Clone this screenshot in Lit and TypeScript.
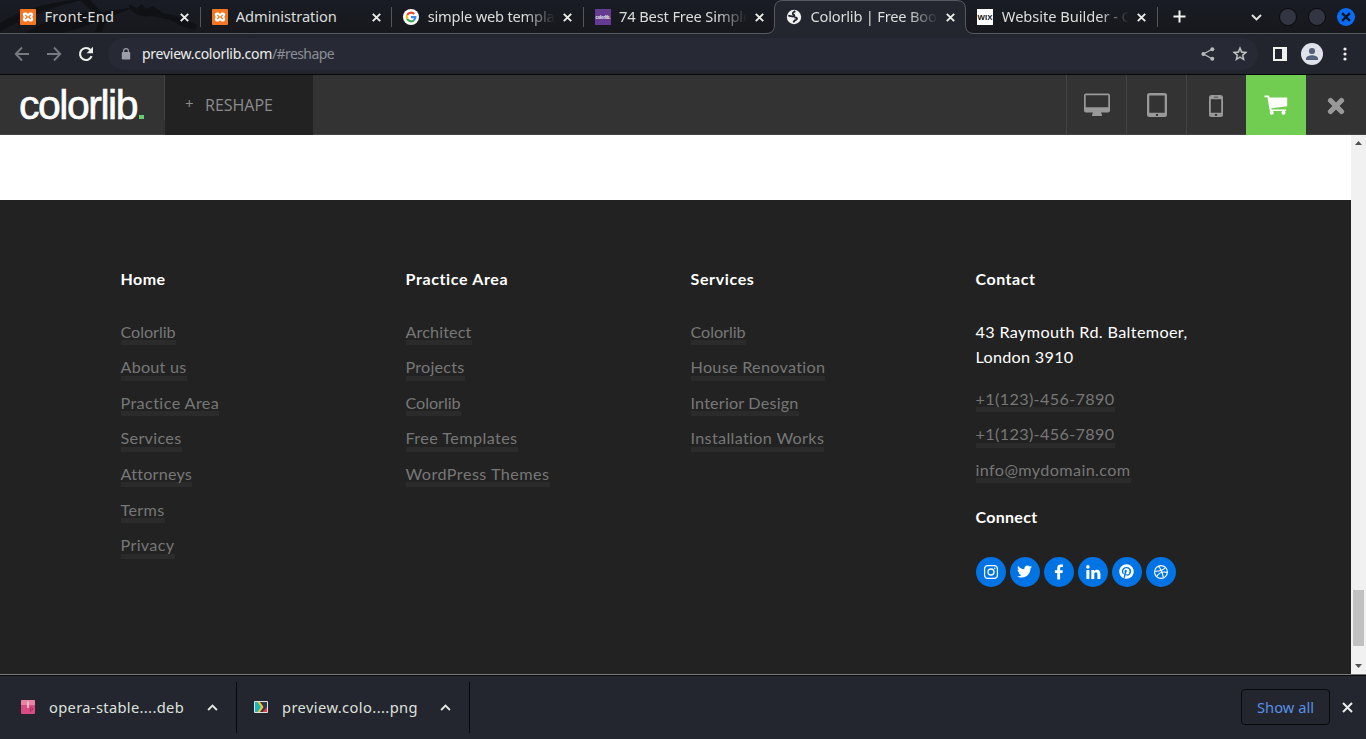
import { LitElement, html, css } from "lit";
import { customElement, property } from "lit/decorators.js";

/* Text whose tracking is derived from the width it has to fill. */
@customElement("fit-text")
class FitText extends LitElement {
  @property({ type: Number }) w = 0;
  @property() text = "";
  static styles = css`
    :host { display: inline-block; white-space: pre; }
    .t { display: inline-block; white-space: pre; }
  `;
  render() { return html`<span class="t">${this.text}</span>`; }
  firstUpdated() {
    const el = this.renderRoot.querySelector(".t") as HTMLElement;
    const natural = el.getBoundingClientRect().width;
    el.style.letterSpacing = (this.w - natural) / this.text.length + "px";
  }
}

const fit = (text: string, w: number) => html`<fit-text .text=${text} .w=${w}></fit-text>`;

const xampp = html`<svg width="16" height="16" viewBox="0 0 16 16"><rect width="16" height="16" rx="1" fill="#f37623"/><path d="M5 3.400h1.600L8 4.900l1.400-1.500H11c1.400 0 2.200.9 2.200 2.200 0 1-.4 1.700-1 2.300.6.6 1 1.400 1 2.300 0 1.400-.9 2.300-2.200 2.300H9.400L8 11.200l-1.400 1.300H5c-1.400 0-2.200-.9-2.200-2.200 0-1 .4-1.800 1-2.400-.6-.6-1-1.300-1-2.300 0-1.300.8-2.200 2.200-2.200z" fill="#fff"/><path d="M5.300 5.800l1.800 2.100-1.800 2.200M10.700 5.800l-1.800 2.100 1.800 2.200M7 8h2" stroke="#f37623" stroke-width="1.200" fill="none"/></svg>`;
const google = html`<svg width="16" height="16" viewBox="0 0 16 16"><circle cx="8" cy="8" r="8" fill="#fff"/><g fill="none" stroke-width="2.100"><path d="M4.200 5.900A4.400 4.400 0 0 1 11.200 5" stroke="#ea4335"/><path d="M4.200 10.100a4.400 4.400 0 0 1 0-4.200" stroke="#fbbc05"/><path d="M11 11.200a4.400 4.400 0 0 1-6.800-1.100" stroke="#34a853"/><path d="M8 8.100h4.400a4.300 4.300 0 0 1-1.500 3.200" stroke="#4285f4"/></g></svg>`;
const clib = html`<svg width="16" height="16" viewBox="0 0 16 16"><rect width="16" height="16" fill="#653b91"/><text x=".5" y="9.800" font-family="Liberation Sans" font-weight="bold" font-size="5" textLength="15" lengthAdjust="spacingAndGlyphs" fill="#fff">colorlib.</text></svg>`;
const globe = html`<svg width="16" height="16" viewBox="0 0 16 16"><circle cx="8" cy="8" r="7.200" fill="#f1f3f0"/><path d="M9.300 2.200C7.800 3 6.600 3.500 6.800 4.700c.2 1 1.600.8 1.500 1.900-.1.900-1.200 1-2.200.8L2.200 6.600M8.300 8.600c1.500-.3 2.500.1 2.700.9.200.9-.8 1.300-1.600 1.700-.8.400-1.200 1.200-2.200 2" fill="none" stroke="#23262f" stroke-width="1.900"/></svg>`;
const wix = html`<svg width="16" height="16" viewBox="0 0 16 16"><rect width="16" height="16" fill="#fff"/><text x=".6" y="10.700" font-family="Liberation Sans" font-weight="bold" font-size="7.500" textLength="14.800" lengthAdjust="spacingAndGlyphs" fill="#111">WIX</text></svg>`;

const tabs = [
  { icon: xampp, text: "Front-End", w: 70 },
  { icon: xampp, text: "Administration", w: 101 },
  { icon: google, text: "simple web template", w: 140, cut: true },
  { icon: clib, text: "74 Best Free Simple", w: 132, cut: true },
  { icon: globe, text: "Colorlib | Free Boots", w: 138, cut: true, active: true },
  { icon: wix, text: "Website Builder - Cr", w: 135, cut: true },
];

const columns = [
  { title: "Home", w: 45, links: [["Colorlib", 55], ["About us", 66], ["Practice Area", 99], ["Services", 61], ["Attorneys", 71], ["Terms", 44], ["Privacy", 54]] },
  { title: "Practice Area", w: 103, links: [["Architect", 66], ["Projects", 59], ["Colorlib", 55], ["Free Templates", 112], ["WordPress Themes", 144]] },
  { title: "Services", w: 64, links: [["Colorlib", 55], ["House Renovation", 135], ["Interior Design", 108], ["Installation Works", 134]] },
] as { title: string; w: number; links: [string, number][] }[];
const contact: [string, number][] = [["+1(123)-456-7890", 139], ["+1(123)-456-7890", 139], ["info@mydomain.com", 155]];

const social = [
  html`<svg width="16" height="16" viewBox="0 0 16 16" fill="none" stroke="#fff"><rect x="1.600" y="1.600" width="12.800" height="12.800" rx="3.400" stroke-width="1.250"/><circle cx="8" cy="8" r="3" stroke-width="1.300"/><circle cx="11.700" cy="4.300" r=".8" fill="#fff" stroke="none"/></svg>`,
  html`<svg width="15" height="15" viewBox="0 0 512 512" fill="#fff"><path d="M459.370 151.716c.325 4.548.325 9.097.325 13.645 0 138.720-105.583 298.558-298.558 298.558-59.452 0-114.680-17.219-161.137-47.106 8.447.974 16.568 1.299 25.340 1.299 49.055 0 94.213-16.568 130.274-44.832-46.132-.975-84.792-31.188-98.112-72.772 6.498.974 12.995 1.624 19.818 1.624 9.421 0 18.843-1.300 27.614-3.573-48.081-9.747-84.143-51.980-84.143-102.985v-1.299c13.969 7.797 30.214 12.670 47.431 13.319-28.264-18.843-46.781-51.005-46.781-87.391 0-19.492 5.197-37.360 14.294-52.954 51.655 63.675 129.300 105.258 216.365 109.807-1.624-7.797-2.599-15.918-2.599-24.040 0-57.828 46.782-104.934 104.934-104.934 30.213 0 57.502 12.670 76.670 33.137 23.715-4.548 46.456-13.320 66.599-25.340-7.798 24.366-24.366 44.833-46.132 57.827 21.117-2.273 41.584-8.122 60.426-16.243-14.292 20.791-32.161 39.308-52.628 54.253z"/></svg>`,
  html`<svg width="16" height="16" viewBox="0 0 16 16" fill="#fff"><path d="M12 .6v2.500h-1.500c-1.200 0-1.400.6-1.400 1.300v1.800h2.800l-.4 2.800H9.100v6.600H6.200V9H3.900V6.200h2.300V4.100C6.200 1.800 7.600.5 9.800.500c1 0 1.900.1 2.200.1z"/></svg>`,
  html`<svg width="16" height="16" viewBox="0 0 16 16" fill="#fff"><circle cx="2.900" cy="2.900" r="1.800"/><path d="M1.400 6h3v9h-3zM6.300 6h3v1.300C9.800 6.500 10.600 5.800 12 5.800c2 0 3.400 1.300 3.400 4.100V15h-3v-4.800c0-1.200-.4-2-1.500-2s-1.600.9-1.600 1.900V15h-3z"/></svg>`,
  html`<svg width="15" height="15" viewBox="0 0 496 512" fill="#fff"><path d="M496 256c0 137-111 248-248 248-25.600 0-50.200-3.900-73.400-11.100 10.100-16.500 25.200-43.500 30.800-65 3-11.600 15.400-59 15.400-59 8.100 15.400 31.700 28.500 56.800 28.500 74.800 0 128.700-68.800 128.700-154.300 0-81.900-66.900-143.200-152.900-143.200-107 0-163.900 71.800-163.900 150.100 0 36.400 19.400 81.700 50.300 96.100 4.700 2.200 7.200 1.200 8.300-3.300.8-3.400 5-20.300 6.900-28.100.6-2.500.3-4.700-1.700-7.100-10.100-12.500-18.300-35.300-18.300-56.600 0-54.700 41.400-107.600 112-107.600 60.900 0 103.600 41.500 103.600 100.900 0 67.100-33.900 113.600-78 113.600-24.300 0-42.600-20.100-36.700-44.800 7-29.500 20.500-61.300 20.500-82.600 0-19-10.200-34.900-31.400-34.900-24.900 0-44.900 25.700-44.900 60.200 0 22 7.400 36.800 7.400 36.800s-24.500 103.800-29 123.200c-5 21.400-3 51.600-.9 71.200C65.400 450.900 0 361.100 0 256 0 119 111 8 248 8s248 111 248 248z"/></svg>`,
  html`<svg width="16" height="16" viewBox="0 0 16 16" fill="none" stroke="#fff" stroke-width="1.100"><circle cx="8" cy="8" r="6.400"/><path d="M5.500 2.200c2.500 3 4 6.600 4.900 11.500M1.700 7.200c4.600.1 8.400-.7 10.700-3.700M3.700 12.600C6 8.500 9.500 7.300 14.300 8.400"/></svg>`,
];

const chevronUp = html`<svg width="11" height="7" viewBox="0 0 11 7"><path d="M1.100 6l4.400-4.400L9.900 6" fill="none" stroke="#e4e6e2" stroke-width="1.900"/></svg>`;

@customElement("app-root")
class AppRoot extends LitElement {
  static styles = css`
    :host { display: flex; flex-direction: column; width: 1366px; height: 739px; overflow: hidden; background: #222; font-family: "Noto Sans", sans-serif; }
    * { box-sizing: border-box; }
    svg { display: block; flex: none; }
    .strip { height: 34px; flex: none; display: flex; position: relative; background: linear-gradient(#191c25, #17181c); padding-left: 9.400px; box-shadow: inset 0 -1px #555960; }
    .dragon { position: absolute; left: 0; top: 0; }
    .tab { width: 191.400px; height: 34px; display: flex; align-items: center; padding: 0 11px; position: relative; isolation: isolate; font-size: 14.670px; line-height: 20px; color: #dcdedb; }
    .tab .label { margin-left: 8px; width: 130px; overflow: hidden; white-space: nowrap; height: 22px; }
    .tab .cut { -webkit-mask-image: linear-gradient(to right, #000 98px, transparent 128px); padding-left: .5px; }
    .tab .cross { margin-left: 6px; margin-right: -2px; }
    .tab.line::after { content: ""; position: absolute; right: 0; top: 7px; width: 1px; height: 20px; background: #53565c; }
    .edge { position: absolute; left: -9px; top: 0; z-index: -1; }
    .plus { width: 13px; margin: 10px 0 0 15px; }
    .wm { margin-left: auto; display: flex; align-items: center; padding-right: 11px; height: 34px; }
    .wm .chev { margin-right: 17px; }
    .dot { width: 18px; height: 18px; border-radius: 50%; background: #323643; border: 1px solid #090a0d; margin-right: 11px; }
    .dot.blue { background: #0a6cf5; border: 0; margin: 0; display: grid; place-items: center; }
    .bar { height: 41px; flex: none; background: #23252e; border-bottom: 1px solid #060709; display: flex; align-items: center; padding-left: 14px; }
    .nav { display: flex; gap: 16px; align-items: center; }
    .omni { width: 1150px; height: 32px; border-radius: 16px; background: #272a35; margin-left: 14px; display: flex; align-items: center; padding: 0 10px 0 13px; font-size: 14px; line-height: 20px; color: #eceeea; }
    .omni .url { margin-left: 11px; white-space: nowrap; }
    .omni .dim { color: #8b8e96; }
    .omni .share { margin-left: auto; margin-right: 17px; }
    .side { margin-left: 15px; }
    .user { margin-left: 14px; }
    .more { margin-left: 20px; }
    .head { height: 60px; flex: none; display: flex; background: #333; box-shadow: inset 0 -1px #444; }
    .brand { width: 165px; height: 60px; padding: 7px 0 0 19px; position: relative; font: 41px/46px "Liberation Sans", sans-serif; color: #fff; -webkit-text-stroke: .6px #fff; display: flex; }
    .brand::after { content: ""; position: absolute; right: 0; top: 0; width: 1px; height: 45px; background: #444; }
    .brand i { width: 5px; height: 4px; background: #62d070; margin: 33px 0 0 2px; }
    .demo { width: 148px; height: 60px; background: #222; color: #8c8c8c; font: 400 16px/60px "Open Sans", "Noto Sans", sans-serif; padding-left: 20px; display: flex; }
    .demo .p { width: 20px; font-size: 15px; line-height: 57px; }
    .tools { margin-left: auto; display: flex; }
    .tool { width: 60px; height: 60px; border-left: 1px solid #444; display: grid; place-items: center; }
    .tool.phone { padding: 2px 2px 0 0; }
    .tool.buy { background: #70cd52; border: 0; }
    .tool.close { border: 0; padding-top: 2px; }
    .view { height: 539px; flex: none; display: flex; background: #fff; }
    .page { width: 1351px; padding-top: 65px; }
    .foot { height: 474px; background: #222; display: grid; grid-template-columns: 285px 285px 285px 260px; padding: 64px 0 0 120.500px; font-family: Lato, sans-serif; font-size: 16.200px; line-height: 28.800px; }
    .foot h3 { margin: 0 0 28px; font-size: 16px; line-height: 29px; font-weight: 700; color: #fff; height: 29px; }
    .foot ul { list-style: none; margin: -.3px 0 0; padding: 0; color: #777; }
    .foot li { height: 25.600px; margin-bottom: 10px; line-height: 22px; }
    .foot li span { display: inline-block; height: 24.300px; border-bottom: 5px solid #2b2b2b; }
    .foot li fit-text { line-height: 22px; height: 19px; }
    .foot p { margin: -2px 0 15px; color: #fff; line-height: 25px; height: 54px; }
    .foot h3.connect { margin: 17.300px 0 25px; }
    .soc { display: flex; gap: 4px; margin-top: 26px; }
    .soc span { width: 30px; height: 30px; border-radius: 50%; background: #0074e4; display: grid; place-items: center; }
    .scroll { width: 15px; background: #f1f1f1; display: flex; flex-direction: column; align-items: center; }
    .scroll .up { margin-top: 6px; }
    .thumb { width: 11px; height: 56px; background: #c1c1c1; margin-top: 445px; }
    .scroll .down { margin-top: 18px; }
    .shelf { flex: 1; background: #23262f; border-top: 1px solid #777b7c; box-shadow: inset 0 1px #08090b; display: flex; align-items: flex-start; padding-top: 7px; font-size: 14.670px; color: #dfe1dd; }
    .item { height: 51px; border-right: 1px solid #07080a; display: flex; align-items: center; }
    .item svg { margin-top: -1px; }
    .item svg:last-child { margin-left: auto; margin-right: 18px; }
    .item.a { width: 237px; padding-left: 21px; }
    .item.b { width: 233px; padding-left: 17px; }
    .item fit-text { margin: -2px 0 0 14px; }
    .all { margin: 7px 0 0 auto; width: 89px; height: 36px; border: 1px solid #08090b; border-radius: 4px; display: grid; place-items: center; color: #5790e6; padding-bottom: 1px; }
    .x { margin: 20px 13px 0 12px; }
  `;

  private edge() {
    return html`<svg class="edge" width="208" height="34" viewBox="0 0 208 34"><path d="M0 34v-.500Q8.500 33.500 8.500 25V9Q8.500.500 17 .500H191Q199.500.500 199.500 9v16q0 8.500 8.500 8.500v.500z" fill="#23262f"/><path d="M0 33.500Q8.500 33.500 8.500 25V9Q8.500.500 17 .500H191Q199.500.500 199.500 9v16q0 8.500 8.500 8.500" fill="none" stroke="#555960"/></svg>`;
  }

  private links(list: [string, number][]) {
    return html`<ul>${list.map(([t, w]) => html`<li><span>${fit(t, w)}</span></li>`)}</ul>`;
  }

  render() {
    return html`
      <div class="strip">
        <svg class="dragon" width="200" height="33" viewBox="0 0 200 33"><g fill="#101115"><path d="M0 23Q30 5 72 0h9Q40 10 0 31zM25 33Q60 11 104 12l30-5Q100 22 63 33zM80 0h10l17 18-5 14h-7l5-13zM128 4l9 4 5-4 4 5 7-3 10 7q18 3 34 12l-2 5-14-4q-10-8-31-10-11 2-19-6z"/></g></svg>
        ${tabs.map((t, i) => html`<div class="tab ${i !== 3 && i !== 4 ? "line" : ""}">
          ${t.active ? this.edge() : ""}
          ${t.icon}
          <div class="label ${t.cut ? "cut" : ""}">${fit(t.text, t.w)}</div>
          <svg class="cross" width="9" height="9" viewBox="0 0 9 9"><path d="M.8.800l7.400 7.400M8.200.800L.8 8.200" stroke="#eceee9" stroke-width="1.900"/></svg>
        </div>`)}
        <svg class="plus" width="13" height="13" viewBox="0 0 13 13"><path d="M6.500.5v12M.5 6.500h12" stroke="#f1f3ee" stroke-width="2"/></svg>
        <div class="wm">
          <svg class="chev" width="11" height="7" viewBox="0 0 11 7"><path d="M1 1l4.500 4.500L10 1" fill="none" stroke="#e4e6e2" stroke-width="1.900"/></svg>
          <div class="dot"></div><div class="dot"></div>
          <div class="dot blue"><svg width="10" height="10" viewBox="0 0 9 9"><path d="M1 1l7 7M8 1L1 8" stroke="#101319" stroke-width="2"/></svg></div>
        </div>
      </div>
      <div class="bar">
        <div class="nav">
          <svg width="16" height="16" viewBox="0 0 16 16"><path d="M15 8H2M8 1.500L1.700 8 8 14.500" fill="none" stroke="#777a80" stroke-width="1.800"/></svg>
          <svg width="16" height="16" viewBox="0 0 16 16"><path d="M1 8h13M8 1.500L14.300 8 8 14.500" fill="none" stroke="#777a80" stroke-width="1.800"/></svg>
          <svg width="16" height="16" viewBox="0 0 16 16"><path d="M13.600 10.200A6 6 0 1 1 12.500 4" fill="none" stroke="#eceee9" stroke-width="2.100"/><path d="M15 .8v6.400H8.600z" fill="#eceee9"/></svg>
        </div>
        <div class="omni">
          <svg width="10" height="12" viewBox="0 0 10 12"><rect x=".8" y="4" width="8.400" height="7.600" rx=".8" fill="#9b9ea8"/><path d="M2.600 4.500V3a2.400 2.400 0 0 1 4.800 0v1.500" fill="none" stroke="#9b9ea8" stroke-width="1.200"/></svg>
          <div class="url">${fit("preview.colorlib.com", 130)}<span class="dim">${fit("/#reshape", 62)}</span></div>
          <svg class="share" width="14" height="14" viewBox="0 0 14 14"><path d="M11.500 2L2.500 7l9 5" fill="none" stroke="#b8bab8" stroke-width="1.300"/><g fill="#b8bab8"><circle cx="11.300" cy="2.200" r="2"/><circle cx="2.400" cy="7" r="2"/><circle cx="11.300" cy="11.800" r="2"/></g></svg>
          <svg width="16" height="16" viewBox="1 1 22 22"><path d="M22 9.240l-7.190-.62L12 2 9.190 8.630 2 9.240l5.460 4.730L5.820 21 12 17.270 18.180 21l-1.630-7.030zM12 15.400l-3.760 2.270 1-4.280-3.320-2.880 4.380-.38L12 6.100l1.710 4.040 4.380.38-3.320 2.880 1 4.280z" fill="#c6c8c6" stroke="#c6c8c6" stroke-width=".5"/></svg>
        </div>
        <svg class="side" width="14" height="14" viewBox="0 0 14 14"><path d="M0 0h14v14H0zM2 2v10h7V2z" fill="#f0f1ec" fill-rule="evenodd"/></svg>
        <svg class="user" width="22" height="22" viewBox="0 0 22 22"><circle cx="11" cy="11" r="11" fill="#dfe2e8"/><circle cx="11" cy="8" r="3.100" fill="#56627a"/><path d="M5 17v-1.600c0-2.200 4-3.200 6-3.200s6 1 6 3.200V17z" fill="#56627a"/></svg>
        <svg class="more" width="4" height="14" viewBox="0 0 4 14" fill="#f0f1ec"><circle cx="2" cy="2" r="1.600"/><circle cx="2" cy="7" r="1.600"/><circle cx="2" cy="12" r="1.600"/></svg>
      </div>
      <div class="head">
        <div class="brand">${fit("colorlib", 118)}<i></i></div>
        <div class="demo"><span class="p">+</span>${fit("RESHAPE", 68)}</div>
        <div class="tools">
          <div class="tool"><svg width="26" height="24" viewBox="0 0 26 24"><path d="M2 .5h22q2 0 2 2v15q0 2-2 2h-7l1 2.500v1H8v-1l1-2.500H2q-2 0-2-2v-15q0-2 2-2zM1.700 2.300v11.900h22.600V2.300z" fill="#999" fill-rule="evenodd"/></svg></div>
          <div class="tool"><svg width="20" height="24" viewBox="0 0 20 24"><path d="M2.500 0h15Q20 0 20 2.500v19q0 2.500-2.500 2.500h-15Q0 24 0 21.500v-19Q0 0 2.500 0zM2.300 2.600v17.200h15.400V2.600zM9 21v2h2v-2z" fill="#999" fill-rule="evenodd"/></svg></div>
          <div class="tool phone"><svg width="14" height="22" viewBox="0 0 14 22"><path d="M2.500 0h9Q14 0 14 2.500v17q0 2.500-2.500 2.500h-9Q0 22 0 19.500v-17Q0 0 2.500 0zM1.800 4.200v13.600h10.400V4.200zM5 1.800v.8h4v-.800zM5.800 19v1.800h2.400V19z" fill="#999" fill-rule="evenodd"/></svg></div>
          <div class="tool buy"><svg width="24" height="20" viewBox="0 0 24 20" fill="#fff"><path d="M.5.500h4.300l.8 1.900h17.600v8.800L7.300 13.200l.3 1.400h14.500v1.400H6.100L5.200 13 3.500 2.200H.5z"/><circle cx="7.700" cy="17.700" r="2"/><circle cx="19.500" cy="17.700" r="2"/></svg></div>
          <div class="tool close"><svg width="18" height="18" viewBox="0 0 18 18"><path d="M3.500 3.500l11 11M14.500 3.500l-11 11" stroke="#999" stroke-width="5.200" stroke-linecap="round"/></svg></div>
        </div>
      </div>
      <div class="view">
        <div class="page"><div class="foot">
          ${columns.map(c => html`<div><h3>${fit(c.title, c.w)}</h3>${this.links(c.links)}</div>`)}
          <div><h3>${fit("Contact", 60)}</h3>
            <p>${fit("43 Raymouth Rd. Baltemoer,", 212)}<br>${fit("London 3910", 98)}</p>
            ${this.links(contact)}
            <h3 class="connect">${fit("Connect", 62)}</h3>
            <div class="soc">${social.map(s => html`<span>${s}</span>`)}</div>
          </div>
        </div></div>
        <div class="scroll">
          <svg class="up" width="7" height="4" viewBox="0 0 7 4"><path d="M0 4l3.500-4L7 4z" fill="#505050"/></svg>
          <div class="thumb"></div>
          <svg class="down" width="7" height="4" viewBox="0 0 7 4"><path d="M0 0l3.500 4L7 0z" fill="#505050"/></svg>
        </div>
      </div>
      <div class="shelf">
        <div class="item a"><svg width="14" height="14" viewBox="0 0 14 14"><rect width="14" height="14" rx="1" fill="#d94c83"/><path d="M0 1q0-1 1-1h12q1 0 1 1v4H0z" fill="#e883a6"/><path d="M6 1.500h2V8H6z" fill="#f3b9cb"/><path d="M9.500 12V8.500q0-1 1-1t1 1V10h-2" stroke="#a82d5d" fill="none"/></svg>${fit("opera-stable....deb", 135)}${chevronUp}</div>
        <div class="item b"><svg width="14" height="12" viewBox="0 0 14 12"><rect width="14" height="12" rx="1" fill="#e1e2df"/><path d="M1 1h12v10H1z" fill="#31384b"/><path d="M1 1h3l4 5-4 5H1z" fill="#18b6bd"/><path d="M3.500 1H6l3.500 5L6 11H3.500L7 6z" fill="#f9c62f"/><path d="M13 6v5H8.500z" fill="#e5394d"/></svg>${fit("preview.colo....png", 136)}${chevronUp}</div>
        <div class="all">${fit("Show all", 57)}</div>
        <svg class="x" width="11" height="11" viewBox="0 0 11 11"><path d="M1 1l9 9M10 1l-9 9" stroke="#eceee9" stroke-width="2"/></svg>
      </div>
    `;
  }
}
